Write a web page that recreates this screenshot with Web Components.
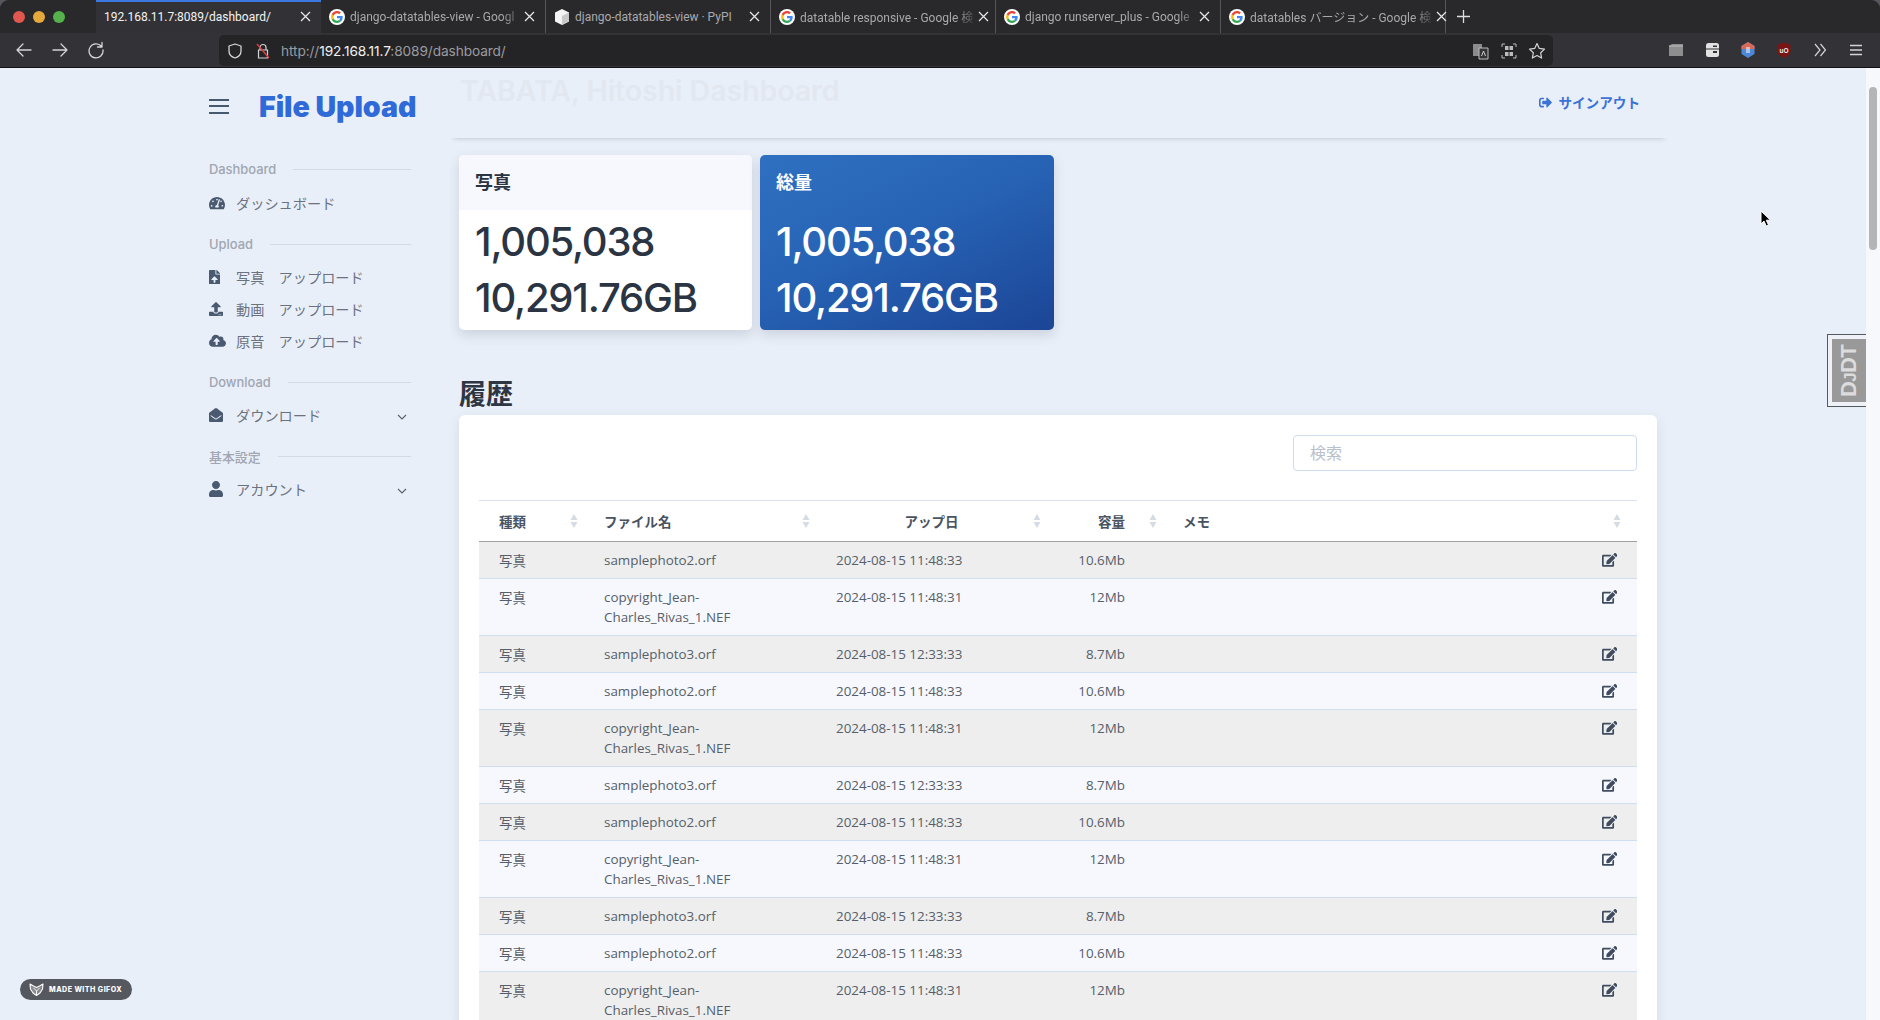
<!DOCTYPE html>
<html lang="ja"><head><meta charset="utf-8"><title>File Upload</title>
<style>
html,body{margin:0;padding:0;height:1020px;overflow:hidden;background:#55575c}
body{font-family:"Noto Sans CJK JP","Noto Sans",sans-serif}
x-app{display:flex;flex-direction:column;width:1880px;height:1020px}
</style></head><body>
<x-app>
  <x-browser></x-browser>
  <x-page>
    <x-sidebar slot="side"></x-sidebar>
    <x-topbar slot="top"></x-topbar>
    <div slot="cards" style="display:flex;gap:8px">
      <x-stat-card label="写真" count="1,005,038" size="10,291.76GB"></x-stat-card>
      <x-stat-card label="総量" count="1,005,038" size="10,291.76GB" variant="blue"></x-stat-card>
    </div>
    <x-history slot="history"></x-history>
  </x-page>
</x-app>
<script>
const ICONS={
 gauge:[576,"M288 32C128.94 32 0 160.94 0 320c0 52.8 14.25 102.26 39.06 144.8 5.61 9.62 16.3 15.2 27.44 15.2h443c11.14 0 21.83-5.58 27.44-15.2C561.75 422.26 576 372.8 576 320c0-159.06-128.94-288-288-288zm0 64c14.71 0 26.58 10.13 30.32 23.65-1.11 2.26-2.64 4.23-3.45 6.67l-9.22 27.67c-5.13 3.49-10.97 6.01-17.64 6.01-17.67 0-32-14.33-32-32S270.33 96 288 96zM96 384c-17.67 0-32-14.33-32-32s14.33-32 32-32 32 14.33 32 32-14.33 32-32 32zm48-160c-17.67 0-32-14.33-32-32s14.33-32 32-32 32 14.33 32 32-14.33 32-32 32zm246.77-72.41l-61.33 184C343.13 347.33 352 364.54 352 384c0 11.72-3.38 22.55-8.88 32H232.88c-5.5-9.45-8.88-20.28-8.88-32 0-33.94 26.5-61.43 59.9-63.59l61.34-184.01c4.17-12.56 17.73-19.45 30.36-15.17 12.57 4.19 19.35 17.79 15.17 30.36zm14.66 57.2l15.52-46.55c3.47-1.29 7.13-2.23 11.05-2.23 17.67 0 32 14.33 32 32s-14.33 32-32 32c-11.38-.01-20.89-6.28-26.57-15.22zM480 384c-17.67 0-32-14.33-32-32s14.33-32 32-32 32 14.33 32 32-14.33 32-32 32z"],
 file:[384,"M224 136V0H24C10.7 0 0 10.7 0 24v464c0 13.3 10.7 24 24 24h336c13.3 0 24-10.7 24-24V160H248c-13.2 0-24-10.8-24-24zm65.18 216.01H224v80c0 8.84-7.16 16-16 16h-32c-8.84 0-16-7.16-16-16v-80H94.82c-14.28 0-21.41-17.29-11.27-27.36l96.42-95.7c6.65-6.61 17.39-6.61 24.04 0l96.42 95.7c10.15 10.07 3.03 27.36-11.25 27.36zM377 105L279.1 7c-4.5-4.5-10.6-7-17-7H256v128h128v-6.1c0-6.3-2.5-12.4-7-16.9z"],
 upload:[512,"M296 384h-80c-13.3 0-24-10.7-24-24V192h-87.7c-17.8 0-26.7-21.5-14.1-34.1L242.3 5.7c7.5-7.5 19.8-7.5 27.3 0l152.2 152.2c12.6 12.6 3.7 34.1-14.1 34.1H320v168c0 13.3-10.7 24-24 24zm216-8v112c0 13.3-10.7 24-24 24H24c-13.3 0-24-10.7-24-24V376c0-13.3 10.7-24 24-24h136v8c0 30.9 25.1 56 56 56h80c30.9 0 56-25.1 56-56v-8h136c13.3 0 24 10.7 24 24zm-124 88c0-11-9-20-20-20s-20 9-20 20 9 20 20 20 20-9 20-20zm64 0c0-11-9-20-20-20s-20 9-20 20 9 20 20 20 20-9 20-20z"],
 cloud:[640,"M537.6 226.6c4.1-10.7 6.4-22.4 6.4-34.6 0-53-43-96-96-96-19.7 0-38.1 6-53.3 16.2C367 64.2 315.3 32 256 32c-88.4 0-160 71.6-160 160 0 2.7.1 5.4.2 8.1C40.2 219.8 0 273.2 0 336c0 79.5 64.5 144 144 144h368c70.7 0 128-57.3 128-128 0-61.9-44-113.6-102.4-125.4zM393.4 288H328v112c0 8.8-7.2 16-16 16h-48c-8.8 0-16-7.2-16-16V288h-65.4c-14.3 0-21.4-17.2-11.3-27.3l105.4-105.4c6.2-6.2 16.4-6.2 22.6 0l105.4 105.4c10.1 10.1 2.9 27.3-11.3 27.3z"],
 envelope:[512,"M512 464c0 26.51-21.49 48-48 48H48c-26.51 0-48-21.49-48-48V200.724a48 48 0 0 1 18.387-37.776c24.913-19.529 45.501-35.365 164.2-121.511C199.412 29.17 232.797-.347 256 .003c23.198-.354 56.596 29.172 73.413 41.433 118.687 86.137 139.303 101.995 164.2 121.512A48 48 0 0 1 512 200.724V464zm-65.666-196.605c-2.563-3.728-7.7-4.595-11.339-1.907-22.845 16.873-55.462 40.705-105.582 77.079-16.825 12.266-50.21 41.781-73.413 41.43-23.211.344-56.559-29.143-73.413-41.43-50.114-36.37-82.734-60.204-105.582-77.079-3.639-2.688-8.776-1.821-11.339 1.907l-9.072 13.196a7.998 7.998 0 0 0 1.839 10.967c22.887 16.899 55.454 40.69 105.303 76.868 20.274 14.781 56.524 47.813 92.264 47.573 35.724.242 71.961-32.771 92.263-47.573 49.85-36.179 82.418-59.97 105.303-76.868a7.998 7.998 0 0 0 1.839-10.967l-9.071-13.196z"],
 user:[448,"M224 256c70.7 0 128-57.3 128-128S294.7 0 224 0 96 57.3 96 128s57.3 128 128 128zm89.6 32h-16.7c-22.2 10.2-46.9 16-72.9 16s-50.6-5.8-72.9-16h-16.7C60.2 288 0 348.2 0 422.4V464c0 26.5 21.5 48 48 48h352c26.5 0 48-21.5 48-48v-41.6c0-74.2-60.2-134.4-134.4-134.4z"],
 edit:[576,"M402.6 83.2l90.2 90.2c3.8 3.8 3.8 10 0 13.8L274.4 405.6l-92.8 10.3c-12.4 1.4-22.9-9.1-21.5-21.5l10.3-92.8L388.8 83.2c3.8-3.8 10-3.8 13.8 0zm162-22.9l-48.8-48.8c-15.2-15.2-39.9-15.2-55.2 0l-35.4 35.4c-3.8 3.8-3.8 10 0 13.8l90.2 90.2c3.8 3.8 10 3.8 13.8 0l35.4-35.4c15.2-15.3 15.2-40 0-55.2zM384 346.2V448H64V128h229.8c3.2 0 6.2-1.3 8.5-3.5l40-40c7.6-7.6 2.2-20.5-8.5-20.5H48C21.5 64 0 85.5 0 112v352c0 26.5 21.5 48 48 48h352c26.5 0 48-21.5 48-48V306.2c0-10.7-12.9-16-20.5-8.5l-40 40c-2.2 2.3-3.5 5.3-3.5 8.5z"],
 signout:[512,"M497 273L329 441c-15 15-41 4.5-41-17v-96H152c-13.3 0-24-10.7-24-24v-96c0-13.3 10.7-24 24-24h136V88c0-21.4 25.9-32 41-17l168 168c9.3 9.4 9.3 24.6 0 34zM192 436v-40c0-6.6-5.4-12-12-12H96c-17.7 0-32-14.3-32-32V160c0-17.7 14.3-32 32-32h84c6.6 0 12-5.4 12-12V76c0-6.6-5.4-12-12-12H96c-53 0-96 43-96 96v192c0 53 43 96 96 96h84c6.6 0 12-5.4 12-12z"]
};
const svgIcon=(n,w,c='currentColor')=>{const [vb,d]=ICONS[n];const h=w*512/vb;return `<svg xmlns="http://www.w3.org/2000/svg" width="${w}" height="${h}" viewBox="0 0 ${vb} 512" style="display:block;flex:none"><path fill="${c}" d="${d}"/></svg>`};
const def=(name,css,html)=>customElements.define(name,class extends HTMLElement{
  constructor(){super();this.attachShadow({mode:'open'})}
  connectedCallback(){const h=typeof html==='function'?html(this):html;this.shadowRoot.innerHTML=`<style>${css}</style>${h}`}
});
const G=`<svg width="16" height="16" viewBox="0 0 48 48" style="display:block;flex:none"><circle cx="24" cy="24" r="24" fill="#fff"/><path fill="#4285F4" d="M41 24.5c0-1.3-.1-2.3-.3-3.4H24v6.5h9.7c-.4 2.2-1.700 4.300-3.700 5.600l5.600 4.400C39 34.500 41 30 41 24.500z"/><path fill="#34A853" d="M24 42c4.900 0 8.900-1.600 11.600-4.400L30 33.200c-1.500 1-3.500 1.700-6 1.700-4.700 0-8.600-3.100-10-7.400l-5.800 4.500C11 37.900 17 42 24 42z"/><path fill="#FBBC05" d="M14 27.500c-.8-2.300-.8-4.800 0-7l-5.800-4.500c-2.400 4.900-2.400 11.100 0 16z"/><path fill="#EA4335" d="M24 13.100c2.600 0 4.900.9 6.700 2.600l5-5C32.800 7.900 28.800 6 24 6 17 6 11 10.100 8.200 16l5.800 4.500c1.400-4.300 5.300-7.400 10-7.400z"/></svg>`;
const BOX=`<svg width="16" height="16" viewBox="0 0 16 16" style="display:block;flex:none"><path fill="#f4f4f4" d="M8 0l7 3.400v9.200L8 16l-7-3.400V3.400z"/><path fill="#c9c9c9" d="M8 7l7-3.600v9.200L8 16z"/></svg>`;
const X=`<svg width="11" height="11" viewBox="0 0 11 11"><path stroke="#e6e6e6" stroke-width="1.300" fill="none" d="M1 1l9 9M10 1l-9 9"/></svg>`;

def('x-tab',`
 :host{display:flex;align-items:center;box-sizing:border-box;width:225px;height:33px;padding:0 10px 0 8px;gap:5px;border-right:1px solid #56565a;font:12px "Roboto","Noto Sans CJK JP",sans-serif;color:#a9a9ad;position:relative}
 :host([active]){background:#323236;color:#f2f2f2;border-right:none;box-shadow:inset 0 2px 0 #3b78e0;padding-left:8px}
 .t{flex:1;white-space:nowrap;-webkit-mask-image:linear-gradient(90deg,#000 90%,rgba(0,0,0,.25));mask-image:linear-gradient(90deg,#000 90%,rgba(0,0,0,.25))}
 :host([active]) .t,:host([plain]) .t{-webkit-mask-image:none;mask-image:none}
 .x{flex:none;display:flex}
`,el=>{const ic=el.getAttribute('icon');return `${ic==='g'?G:ic==='box'?BOX:''}<span class="t">${el.getAttribute('text')}</span><span class="x">${X}</span>`});

const line=(d,w=1.300)=>`<svg width="18" height="18" viewBox="0 0 18 18" style="display:block;flex:none"><path d="${d}" stroke="#d4d4d6" stroke-width="${w}" fill="none" stroke-linecap="round" stroke-linejoin="round"/></svg>`;
def('x-browser',`
 :host{display:block;flex:none;height:68px;background:#333337;border-radius:9px 9px 0 0;overflow:hidden}
 .tabs{display:flex;height:33px;background:#29292c;align-items:stretch}
 .lights{width:96px;display:flex;align-items:center;gap:8px;padding-left:13px;box-sizing:border-box}
 .lights i{width:12px;height:12px;border-radius:50%;display:block}
 .plus{width:34px;display:flex;align-items:center;justify-content:center}
 .bar{height:35px;display:flex;align-items:center;background:#333337;border-bottom:1px solid #111;box-sizing:border-box}
 .nav{display:flex;gap:18px;padding-left:15px;width:219px;box-sizing:border-box}
 .url{width:1334px;height:31px;box-sizing:border-box;background:#242427;border-radius:5px;display:flex;align-items:center;padding:1px 7px 0 7px;gap:10px;font:13.700px "Inter","Liberation Sans",sans-serif;color:#9b9b9f;letter-spacing:-.1px}
 .url b{font-weight:400;color:#f0f0f0}
 .u{flex:1;margin-left:-1px}
 .right{display:flex;gap:18px;margin-left:auto;padding-right:15px}
 .ui{display:flex;gap:10px;align-items:center}
`,()=>`
 <div class="tabs">
  <div class="lights"><i style="background:#e0574f"></i><i style="background:#e5a93b"></i><i style="background:#55b14b"></i></div>
  <x-tab active text="192.168.11.7:8089/dashboard/"></x-tab>
  <x-tab icon="g" text="django-datatables-view - Googl"></x-tab>
  <x-tab icon="box" plain text="django-datatables-view · PyPI"></x-tab>
  <x-tab icon="g" text="datatable responsive - Google 検"></x-tab>
  <x-tab icon="g" text="django runserver_plus - Google"></x-tab>
  <x-tab icon="g" text="datatables バージョン - Google 検"></x-tab>
  <div class="plus"><svg width="13" height="13" viewBox="0 0 13 13"><path d="M6.500 0v13M0 6.500h13" stroke="#ddd" stroke-width="1.300"/></svg></div>
 </div>
 <div class="bar">
  <div class="nav">
   ${line('M16 9H2M8 3L2 9l6 6')}
   ${line('M2 9h14M10 3l6 6-6 6')}
   ${line('M14.500 5.500A7 7 0 1 0 16 9M15 1.500v4.500h-4.500')}
  </div>
  <div class="url">
   ${line('M9 2l6 2v5c0 3.500-2.800 6-6 7-3.200-1-6-3.500-6-7V4z')}
   <svg width="18" height="18" viewBox="0 0 18 18" style="display:block;flex:none"><path d="M6 8V5.500a3 3 0 0 1 6 0V8M4.500 8h9v8h-9z" stroke="#d4d4d6" stroke-width="1.200" fill="none"/><path d="M3 2l12 14" stroke="#e0413b" stroke-width="1.400"/></svg>
   <span class="u">http://<b>192.168.11.7</b>:8089/dashboard/</span>
   <div class="ui">
    <svg width="19" height="18" viewBox="0 0 19 18"><path d="M2 2h9v12H2z" fill="#8b8b8e"/><path d="M8 6h9v11H8z" fill="#333337" stroke="#bdbdbf"/><path d="M10.500 14l2-5 2 5" stroke="#ccc" fill="none"/></svg>
    <svg width="18" height="18" viewBox="0 0 18 18"><path d="M2 5V2h3M13 2h3v3M16 13v3h-3M5 16H2v-3" stroke="#bbb" fill="none"/><path d="M5 4h3.500v4H5zM9.500 4H13v4H9.500zM5 10h3.500v4H5zM9.500 10H13v4H9.500z" fill="#bbb"/></svg>
    <svg width="18" height="18" viewBox="0 0 18 18"><path d="M9 1.500l2.300 4.900 5.200.7-3.800 3.700.9 5.300L9 13.500l-4.600 2.600.9-5.300L1.500 7.100l5.200-.7z" stroke="#d4d4d6" stroke-width="1.200" fill="none" stroke-linejoin="round"/></svg>
   </div>
  </div>
  <div class="right">
   <svg width="18" height="18" viewBox="0 0 18 18"><path d="M2 5l3-2h11v12H2z" fill="#8e8e90"/><path d="M2 5h14" stroke="#bbb"/></svg>
   <svg width="18" height="18" viewBox="0 0 18 18"><rect x="3" y="2" width="13" height="14" rx="2.500" fill="#e2e2e4"/><path d="M3 8h13" stroke="#333"/><rect x="10" y="10" width="4" height="2" fill="#333"/><rect x="10" y="4.500" width="4" height="1.500" fill="#333"/></svg>
   <svg width="18" height="18" viewBox="0 0 18 18"><path d="M9 1l6.500 4v8L9 17l-6.500-4V5z" fill="#4d87d8"/><path d="M9 1l6.500 4v3H2.500V5z" fill="#d8695a"/><rect x="7" y="6" width="4" height="6" fill="#eee" opacity=".6"/></svg>
   <svg width="18" height="18" viewBox="0 0 18 18"><path d="M9 1.500l6.500 2.200v6c0 3.500-3 5.800-6.500 7-3.500-1.200-6.500-3.500-6.500-7v-6z" fill="#7b1414"/><text x="9" y="11.500" font-size="6.500" font-family="Liberation Sans" font-weight="700" text-anchor="middle" fill="#eee">uO</text></svg>
   <svg width="18" height="18" viewBox="0 0 18 18"><path d="M4 3l5 6-5 6M9.500 3l5 6-5 6" stroke="#d4d4d6" stroke-width="1.200" fill="none"/></svg>
   <svg width="18" height="18" viewBox="0 0 18 18"><path d="M3 4.500h12M3 9h12M3 13.500h12" stroke="#d4d4d6" stroke-width="1.300"/></svg>
  </div>
 </div>`);

def('x-page',`
 :host{display:flex;flex:1;min-height:0;background:#e9eff8;position:relative;overflow:hidden}
 .side{width:450px;flex:none}
 main{width:1218px;flex:none;box-sizing:border-box;padding:0 11px 0 9px;height:952px;overflow:hidden}
 .top{margin:0 -11px 0 -9px}
 .cards{padding-top:17px}
 .gap{flex:1;position:relative}
 .sb{width:14px;flex:none;background:#f6f8fc;padding:19px 3px 0;box-sizing:border-box}
 .sb i{display:block;height:163px;border-radius:4px;background:#b4b5b7}
`,()=>`
 <div class="side"><slot name="side"></slot></div>
 <main>
  <div class="top"><slot name="top"></slot></div>
  <div class="cards"><slot name="cards"></slot></div>
  <div class="hist"><slot name="history"></slot></div>
 </main>
 <div class="gap"><x-cursor></x-cursor><x-djdt></x-djdt></div>
 <div class="sb"><i></i></div>
 <x-gifox></x-gifox>`);

def('x-cursor',`:host{position:absolute;left:92px;top:142px;display:block;width:12px;height:18px}`,
 `<svg width="12" height="18" viewBox="0 0 12 18" style="display:block"><path d="M1 1v13l3-3 2.200 5 2.300-1-2.200-4.800H10.500z" fill="#000" stroke="#fff" stroke-width="1"/></svg>`);

def('x-djdt',`
 :host{position:absolute;right:0;top:266px;display:block;box-sizing:border-box;width:39px;height:73px;border:1px solid #55585c;border-right:none;background:#eef2f8;padding:4px 0 4px 4px}
 .in{height:100%;background:#999;display:flex;align-items:center;justify-content:center;overflow:hidden}
 span{display:block;flex:none;transform:rotate(-90deg);font:700 22px/1 "Liberation Sans",sans-serif;color:#dcdcdc;white-space:nowrap;letter-spacing:-.7px}
 small{font-size:17px}
`,`<div class="in"><span>D<small>J</small>DT</span></div>`);

def('x-gifox',`
 :host{position:absolute;left:20px;top:911px;display:flex;align-items:center;gap:5px;width:112px;height:21px;box-sizing:border-box;padding-left:9px;border-radius:11px;background:#55585f;color:#fff;font:800 7.100px "Inter",sans-serif;letter-spacing:.45px;white-space:nowrap}
`,`<svg width="15" height="13" viewBox="0 0 15 13" style="display:block;flex:none"><path d="M1 1l3.500 2L7.500 4.500 10.500 3 14 1l-.5 5-2.500 4-3.500 2.500L4 10 1.500 6z" fill="#e4e4e6" fill-opacity=".35" stroke="#fff" stroke-width="1.100" stroke-linejoin="round"/><path d="M4.500 5l3 3 3-3M7.500 8v4" stroke="#fff" stroke-width=".9" fill="none"/></svg><span>MADE WITH GIFOX</span>`);

def('x-nav-label',`
 :host{display:flex;align-items:center;box-sizing:border-box;height:20px;margin:15px 0 7px;font:500 12.900px "Inter","Noto Sans CJK JP",sans-serif;color:#a0a6b2;gap:17px;white-space:nowrap}
 :host([first]){margin-top:0;padding-bottom:1px}
 i{flex:1;height:1px;background:#d3dae5}
`,`<slot></slot><i></i>`);

def('x-nav-item',`
 :host{display:flex;align-items:center;height:32px;font:400 14.200px "Noto Sans CJK JP",sans-serif;color:#6b7280;white-space:nowrap}
 .ic{width:27px;flex:none;display:flex;color:#4a5a70}
 .t{flex:1}
 .c{width:10px;margin:4px 4px 0 0;flex:none}
`,el=>{const n=el.getAttribute('icon'),w=+el.getAttribute('w')||16;
  return `<span class="ic">${svgIcon(n,w)}</span><span class="t"><slot></slot></span>`+(el.hasAttribute('chev')?`<svg class="c" width="10" height="6" viewBox="0 0 10 6"><path d="M1 1l4 4 4-4" stroke="#55606f" stroke-width="1.100" fill="none"/></svg>`:'')});

def('x-sidebar',`
 :host{display:block;box-sizing:border-box;width:450px;padding-left:209px;padding-right:39px}
 .brand{display:flex;align-items:center;height:76px;margin-bottom:16px}
 .bg{display:flex;flex-direction:column;flex:none;gap:4.500px;width:20px;margin-right:30px}
 .bg i{display:block;height:2px;background:#46596f}
 .logo{flex:none;font:900 28.600px "Inter",sans-serif;color:#2f6ad8;letter-spacing:-.05px;white-space:nowrap}
`,`
 <div class="brand"><div class="bg"><i></i><i></i><i></i></div><div class="logo">File Upload</div></div>
 <x-nav-label first>Dashboard</x-nav-label>
 <x-nav-item icon="gauge">ダッシュボード</x-nav-item>
 <x-nav-label>Upload</x-nav-label>
 <x-nav-item icon="file" w="11">写真　アップロード</x-nav-item>
 <x-nav-item icon="upload" w="14">動画　アップロード</x-nav-item>
 <x-nav-item icon="cloud" w="17">原音　アップロード</x-nav-item>
 <x-nav-label>Download</x-nav-label>
 <x-nav-item icon="envelope" w="14" chev>ダウンロード</x-nav-item>
 <x-nav-label>基本設定</x-nav-label>
 <x-nav-item icon="user" w="14" chev style="margin-top:1px">アカウント</x-nav-item>`);

def('x-topbar',`
 :host{display:flex;align-items:center;justify-content:space-between;box-sizing:border-box;height:70px;padding:0 28px 0 10px;background:#e9eff8;box-shadow:0 4px 5px -4px rgba(70,85,110,.32)}
 h1{margin:0 0 26px;font:600 28.600px "Inter",sans-serif;letter-spacing:-.1px;color:#e2e7f0;white-space:nowrap}
 a{display:flex;align-items:center;gap:6px;font:700 13.600px "Noto Sans CJK JP",sans-serif;color:#3a72d8;white-space:nowrap;margin-bottom:2px}
`,`<h1>TABATA, Hitoshi Dashboard</h1><a>${svgIcon('signout',13)}サインアウト</a>`);

def('x-stat-card',`
 :host{display:block;width:293px;height:175px;border-radius:5px;overflow:hidden;background:#fff;color:#2b3443;box-shadow:0 5px 12px rgba(70,85,110,.18)}
 :host([variant=blue]){width:294px;background:linear-gradient(155deg,#2f70c1 0%,#2763b5 45%,#1c4596 100%);color:#fff}
 header{height:51px;padding:0 16px 4px;background:#f7f8fd;display:flex;align-items:center;font:700 18px "Noto Sans CJK JP",sans-serif}
 :host([variant=blue]) header{background:transparent}
 .b{padding:4px 16px;font:500 40px/56px "Inter",sans-serif;letter-spacing:-1.200px;white-space:nowrap}
`,el=>`<header>${el.getAttribute('label')}</header><div class="b"><div>${el.getAttribute('count')}</div><div>${el.getAttribute('size')}</div></div>`);

const LONG=`copyright_Jean-<br>Charles_Rivas_1.NEF`;
const ROWS=[
 ['samplephoto2.orf','2024-08-15 11:48:33','10.6Mb'],[LONG,'2024-08-15 11:48:31','12Mb'],['samplephoto3.orf','2024-08-15 12:33:33','8.7Mb'],
 ['samplephoto2.orf','2024-08-15 11:48:33','10.6Mb'],[LONG,'2024-08-15 11:48:31','12Mb'],['samplephoto3.orf','2024-08-15 12:33:33','8.7Mb'],
 ['samplephoto2.orf','2024-08-15 11:48:33','10.6Mb'],[LONG,'2024-08-15 11:48:31','12Mb'],['samplephoto3.orf','2024-08-15 12:33:33','8.7Mb'],
 ['samplephoto2.orf','2024-08-15 11:48:33','10.6Mb'],[LONG,'2024-08-15 11:48:31','12Mb']];
const SORT=`<svg class="s" width="8" height="14" viewBox="0 0 8 14"><path d="M4 0l3.500 6H.5zM4 14L.5 8h7z" fill="#d6dce4"/></svg>`;
def('x-history',`
 :host{display:block;font-family:"Open Sans","Noto Sans CJK JP",sans-serif}
 h2{margin:0;height:85px;box-sizing:border-box;padding-top:45px;font:700 27px/36px "Noto Sans CJK JP",sans-serif;color:#2e3644}
 .card{background:#fff;border-radius:6px;padding:20px 20px 0;box-shadow:0 4px 12px rgba(70,85,110,.12)}
 .search{display:block;margin-left:auto;box-sizing:border-box;width:344px;height:36px;border:1px solid #cddcec;border-radius:4px;padding:0 16px;font:16px "Noto Sans CJK JP",sans-serif;color:#b9c0cb;line-height:33px;margin-bottom:29px}
 table{border-collapse:collapse;table-layout:fixed;width:1158px;font-size:13.400px;color:#565e6a}
 th{height:40px;padding:0;border-top:1px solid #d6e2f0;border-bottom:1px solid #a2a2a2;font:700 13.500px "Noto Sans CJK JP",sans-serif;color:#4a5361;text-align:left}
 .h{display:flex;align-items:center;height:40px}
 .h span{flex:1}
 td{padding:8px 0;line-height:20px;border-top:1px solid #cfdef0;vertical-align:top;white-space:nowrap}
 tr:nth-child(1) td{border-top:none;padding-top:8px}
 tbody tr:nth-child(odd){background:#eeeeee}
 tbody tr:nth-child(even){background:#f6f8fd}
 .jp{font-family:"Noto Sans CJK JP",sans-serif}
 .c1{padding-left:20px}.c2{padding-left:20px}.c3{padding-left:19px}.c4{text-align:right;padding-right:38px}
 .ed{display:flex;justify-content:flex-end;padding:3px 20px 0 0;color:#3f4c60}
 .a1{padding-left:20px;padding-right:6px}.a2{padding-left:20px;padding-right:7px}.a3{padding-right:8px}
 .a3 span{text-align:center;padding-left:13px}
 .a4 span{text-align:right;padding-right:24px}
 .a4{padding-right:6px}.a5{padding-left:20px;padding-right:16px}
`,()=>`
 <h2>履歴</h2>
 <div class="card">
  <div class="search" role="search">検索</div>
  <table>
   <colgroup><col style="width:105px"><col style="width:233px"><col style="width:232px"><col style="width:114px"><col></colgroup>
   <thead><tr>
    <th><div class="h a1"><span>種類</span>${SORT}</div></th>
    <th><div class="h a2"><span>ファイル名</span>${SORT}</div></th>
    <th><div class="h a3"><span>アップ日</span>${SORT}</div></th>
    <th><div class="h a4"><span>容量</span>${SORT}</div></th>
    <th><div class="h a5"><span>メモ</span>${SORT}</div></th>
   </tr></thead>
   <tbody>${ROWS.map(r=>`<tr><td class="c1 jp">写真</td><td class="c2">${r[0]}</td><td class="c3">${r[1]}</td><td class="c4">${r[2]}</td><td><div class="ed">${svgIcon('edit',15.5)}</div></td></tr>`).join('')}</tbody>
  </table>
 </div>`);
customElements.define('x-app',class extends HTMLElement{constructor(){super();this.attachShadow({mode:'open'}).innerHTML='<style>:host{display:flex;flex-direction:column;width:1880px;height:1020px}</style><slot></slot>'}});
</script>
</body></html>
